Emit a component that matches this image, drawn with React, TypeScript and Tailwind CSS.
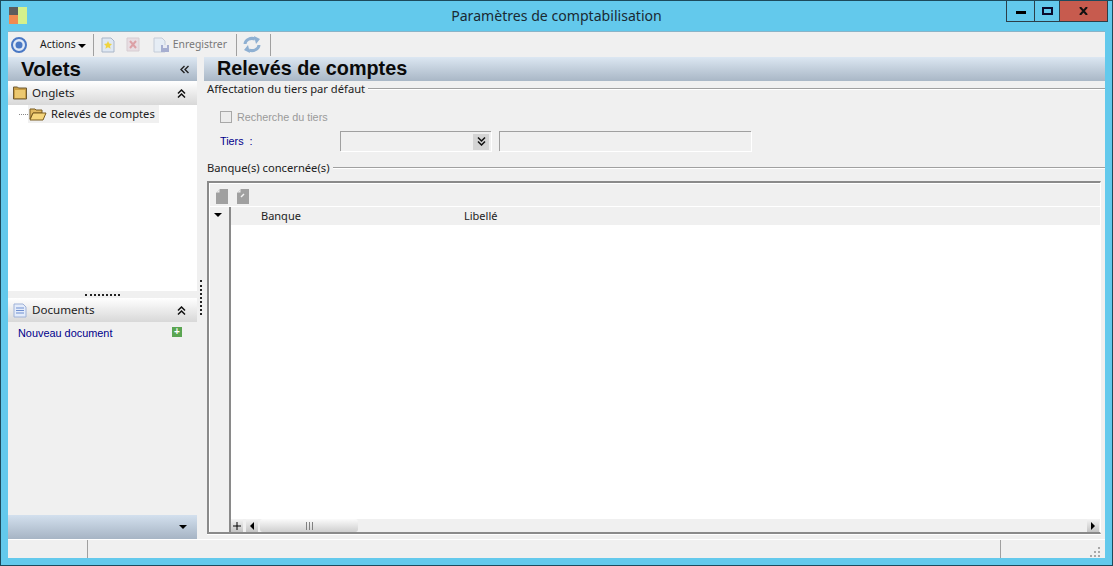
const sans = { fontFamily: '"Noto Sans", "Open Sans", sans-serif' }
const arial = { fontFamily: '"Liberation Sans", Arial, sans-serif' }

function DoubleChevron({ up = true }: { up?: boolean }) {
  return (
    <svg width="9" height="9" viewBox="0 0 9 9" fill="none" stroke="#111" strokeWidth="1.5">
      {up ? (
        <path d="M1 4.5 4.5 1 8 4.5M1 8.5 4.5 5 8 8.5" />
      ) : (
        <path d="M1 .5 4.5 4 8 .5M1 4.5 4.5 8 8 4.5" />
      )}
    </svg>
  )
}

function Folder({ open = false }: { open?: boolean }) {
  return open ? (
    <svg width="18" height="14" viewBox="0 0 18 14">
      <path d="M1 2h5l1 1h6v3H4L1 12z" fill="#e0b860" stroke="#7a5c20" />
      <path d="M1 13 4 6h13l-3 7z" fill="#f6d67c" stroke="#7a5c20" />
    </svg>
  ) : (
    <svg width="14" height="14" viewBox="0 0 14 14">
      <path d="M.5 1h4l1 1h8v11H.5z" fill="#c99e44" stroke="#6f5a34" />
      <path d="M2 4h10v8H2z" fill="#ecc870" />
    </svg>
  )
}

function PanelHead({ title, icon }: { title: string; icon: React.ReactNode }) {
  return (
    <div className="flex h-6 items-center bg-gradient-to-b from-[#ffffff] to-[#d8d8d8] pl-[5px] pr-[11px]">
      <span className="flex w-[19px] shrink-0">{icon}</span>
      <span className="flex-1 text-[11.6px] text-[#222]">{title}</span>
      <DoubleChevron />
    </div>
  )
}

function GroupTitle({ label }: { label: string }) {
  return (
    <div className="flex items-center gap-[3px] text-[11.2px] leading-4 text-[#222]">
      <span className="whitespace-nowrap">{label}</span>
      <span className="h-[2px] flex-1 border-t border-[#a0a0a0] bg-white" />
    </div>
  )
}

function ToolSep() {
  return <span className="block h-[22px] w-px shrink-0 bg-[#a0a0a0]" />
}

function ScrollArrowBox({ children }: { children: React.ReactNode }) {
  return (
    <span className="flex h-[13px] w-[12px] items-center justify-center bg-gradient-to-b from-[#f4f4f4] to-[#c4c4c4]">
      {children}
    </span>
  )
}

export default function App() {
  return (
    <div
      className="flex h-[566px] w-[1113px] flex-col overflow-hidden border border-[#1d4a5c] bg-[#63c9ec] px-[7px] pb-[7px]"
      style={sans}
    >
      {/* Title bar */}
      <div className="relative flex h-[30px] shrink-0 items-center justify-center">
        <span className="text-[14.1px] text-[#1a2a33]">Paramètres de comptabilisation</span>
        <svg className="absolute left-[1px] top-[6px]" width="18" height="17" viewBox="0 0 18 17">
          <rect width="9" height="8" fill="#5d5d5d" />
          <rect y="8" width="9" height="9" fill="#f08a50" />
          <rect x="9" width="9" height="17" fill="#d4f08c" />
        </svg>
        <div className="absolute right-[-3px] top-[-1px] flex h-[22px] border border-t-0 border-[#2c3e48]">
          <span className="flex w-[28px] items-center justify-center border-r border-[#2c3e48]">
            <span className="mt-[3px] h-[3px] w-[10px] bg-black" />
          </span>
          <span className="flex w-[25px] items-center justify-center border-r border-[#2c3e48]">
            <span className="h-[8px] w-[11px] border-2 border-[#0a0a2a]" />
          </span>
          <span className="flex w-[47px] items-center justify-center bg-[#c75b4e]">
            <svg width="9" height="8" viewBox="0 0 9 8" stroke="#111" strokeWidth="2">
              <path d="M1 0l7 8M8 0 1 8" />
            </svg>
          </span>
        </div>
      </div>

      {/* Toolbar */}
      <div className="flex h-[26px] shrink-0 items-center border-t border-[#8ab4c8] bg-[#f0f0f0] pl-[2px] text-[10.4px] text-[#1a1a1a]">
        <svg width="18" height="18" viewBox="0 0 18 18">
          <circle cx="9" cy="9" r="7" fill="#dfe9f7" stroke="#4a78c4" strokeWidth="2" />
          <circle cx="9" cy="9" r="3.5" fill="#4a78c4" />
        </svg>
        <span className="ml-[12px]">Actions</span>
        <span className="ml-[2px] mt-[2px] h-0 w-0 border-x-[4px] border-t-[4px] border-x-transparent border-t-black" />
        <span className="ml-[7px] mr-[6px]"><ToolSep /></span>
        <svg width="16" height="16" viewBox="0 0 16 16">
          <path d="M2 1h9l3 3v11H2z" fill="#dfe8f3" stroke="#a9b6c8" />
          <path d="M8 4l1.2 2.6 2.8.3-2 2 .6 2.8L8 10.3l-2.6 1.4.6-2.8-2-2 2.8-.3z" fill="#f0d440" />
        </svg>
        <svg className="ml-[10px]" width="14" height="15" viewBox="0 0 14 15">
          <path d="M1 1h12v13H1z" fill="#e8dde2" stroke="#d6cdd2" />
          <path d="M4 4l6 7M10 4l-6 7" stroke="#dca0a6" strokeWidth="2" />
        </svg>
        <svg className="ml-[13px]" width="17" height="16" viewBox="0 0 17 16">
          <path d="M1 1h8l3 3v11H1z" fill="#e6edf5" stroke="#c4ccd8" />
          <path d="M8 8h8v7H8z" fill="#a6aed0" />
          <path d="M10 8h4v3h-4z" fill="#e8ebf3" />
        </svg>
        <span className="ml-[3px] text-[#777]">Enregistrer</span>
        <span className="ml-[9px]"><ToolSep /></span>
        <svg className="ml-[6px]" width="18" height="17" viewBox="0 0 18 17" fill="none" stroke="#8fb0d2" strokeWidth="3">
          <path d="M2 8a7 6 0 0 1 10-5" />
          <path d="M16 9a7 6 0 0 1-10 5" />
          <path d="M11 0l6 3-4 5zM7 17l-6-3 4-5z" fill="#8fb0d2" strokeWidth="0" />
        </svg>
        <span className="ml-[9px]"><ToolSep /></span>
      </div>

      {/* Main */}
      <div className="flex min-h-0 flex-1 bg-[#f0f0f0]">
        {/* Sidebar */}
        <div className="flex w-[189px] shrink-0 flex-col">
          <div className="flex h-6 shrink-0 items-center bg-gradient-to-b from-[#dce7f2] to-[#a9b7c6] pl-[13px] pr-[8px]">
            <span className="flex-1 text-[20.5px] font-bold leading-6 text-[#0a0a0a]" style={arial}>
              Volets
            </span>
            <svg width="9" height="9" viewBox="0 0 9 9" fill="none" stroke="#222" strokeWidth="1.4">
              <path d="M4.5 1 1 4.5 4.5 8M8.5 1 5 4.5 8.5 8" />
            </svg>
          </div>
          <PanelHead title="Onglets" icon={<Folder />} />
          <div className="h-[186px] shrink-0 bg-white">
            <div className="flex items-center pl-[11px]">
              <span className="w-[9px] border-t border-dotted border-[#888]" />
              <span className="flex h-[18px] items-center bg-[#f0f0f0] pl-[1px] pr-[4px] text-[11.2px] text-[#222]">
                <span className="mr-[4px] flex"><Folder open /></span>
                Relevés de comptes
              </span>
            </div>
          </div>
          <div className="flex h-[7px] shrink-0 items-center justify-center">
            <span className="w-[35px] border-t-2 border-dotted border-[#222]" />
          </div>
          <PanelHead
            title="Documents"
            icon={
              <svg width="14" height="15" viewBox="0 0 14 15">
                <path d="M1 1h9l3 3v10H1z" fill="#e4ecfa" stroke="#9fb2d8" />
                <path d="M3 5h8M3 7.5h8M3 10h8" stroke="#6f8fd0" />
              </svg>
            }
          />
          <div className="flex flex-1 items-start justify-between pl-[10px] pr-[15px] pt-[3px] text-[10.9px] leading-[16px] text-[#00008b]" style={arial}>
            <span>Nouveau document</span>
            <span className="mt-[2px] flex h-[10px] w-[10px] items-center justify-center bg-[#5aa552] text-[10px] font-bold leading-none text-white">+</span>
          </div>
          <div className="flex h-[24px] shrink-0 items-center justify-end bg-gradient-to-b from-[#d3e0ee] to-[#a6b4c4] pr-[10px]">
            <span className="h-0 w-0 border-x-[4px] border-t-[4px] border-x-transparent border-t-black" />
          </div>
        </div>

        {/* Splitter */}
        <div className="flex w-[7px] shrink-0 items-start justify-center pt-[223px]">
          <span className="h-[35px] border-l-2 border-dotted border-[#222]" />
        </div>

        {/* Right pane */}
        <div className="flex min-w-0 flex-1 flex-col">
          <div className="flex h-6 shrink-0 items-center bg-gradient-to-b from-[#dce7f2] to-[#a9b7c6] pl-[13px] text-[19.8px] font-bold text-[#0a0a0a]" style={arial}>
            Relevés de comptes
          </div>
          <div className="flex min-h-0 flex-1 flex-col pl-[3px]">
            <GroupTitle label="Affectation du tiers par défaut" />
            <div className="mt-[12px] flex items-center pl-[13px] text-[10.8px] leading-4 text-[#9a9a9a]" style={arial}>
              <span className="mr-[5px] h-[12px] w-[12px] border border-[#a8a8a8] bg-[#ececec]" />
              Recherche du tiers
            </div>
            <div className="mt-[6px] flex h-5 items-center pl-[13px] text-[10.8px]" style={arial}>
              <span className="w-[120px] text-[#00008b]">Tiers &nbsp;:</span>
              <span className="flex h-5 w-[151px] items-center justify-end border-l border-t border-[#a0a0a0] bg-[#f0f0f0] pr-[2px] shadow-[1px_1px_0_#fff]">
                <span className="flex h-[16px] w-[16px] items-center justify-center bg-[#d4d4d4]">
                  <DoubleChevron up={false} />
                </span>
              </span>
              <span className="ml-[8px] h-5 w-[252px] border-l border-t border-[#a0a0a0] bg-[#f0f0f0] shadow-[1px_1px_0_#fff]" />
            </div>
            <div className="mt-[9px]">
              <GroupTitle label="Banque(s) concernée(s)" />
            </div>

            {/* Grid */}
            <div className="mt-[5px] mb-[5px] mr-[4px] flex min-h-0 flex-1 flex-col border-b-2 border-l-2 border-r border-t-2 border-b-[#8a8a8a] border-l-[#8a8a8a] border-r-white border-t-[#8a8a8a] shadow-[inset_1px_1px_0_#fff,0_1px_0_#fff]">
              <div className="flex h-[23px] shrink-0 items-center gap-[9px] pl-[7px] pt-[3px]">
                {[0, 1].map((n) => (
                  <svg key={n} width="12" height="15" viewBox="0 0 12 15">
                    <path d="M0 4 4 0h8v15H0z" fill="#a0a0a0" />
                    <path d="M.5 3.5h3v-3z" fill="#ececec" />
                    {n === 1 && <path d="M4 8l3-3" stroke="#f4f4f4" strokeWidth="1.5" />}
                  </svg>
                ))}
              </div>
              <div className="flex min-h-0 flex-1 border-t border-white">
                <div className="flex w-[22px] shrink-0 flex-col items-center border-r-2 border-[#8a8a8a] pt-[6px]">
                  <span className="mr-[2px] h-0 w-0 border-x-[4px] border-t-[4px] border-x-transparent border-t-black" />
                </div>
                <div className="flex min-w-0 flex-1 flex-col">
                  <div className="flex h-[18px] shrink-0 items-center pt-[1px] text-[11px] text-[#222]">
                    <span className="ml-[30px] w-[203px]">Banque</span>
                    <span>Libellé</span>
                  </div>
                  <div className="min-h-0 flex-1 bg-white" />
                  <div className="flex h-[13px] shrink-0 items-center">
                    <ScrollArrowBox>
                      <svg width="8" height="8" viewBox="0 0 8 8" stroke="#000">
                        <path d="M4 0v8M0 4h8" />
                      </svg>
                    </ScrollArrowBox>
                    <span className="ml-[3px]">
                      <ScrollArrowBox>
                        <span className="h-0 w-0 border-y-[4px] border-r-[4px] border-y-transparent border-r-black" />
                      </ScrollArrowBox>
                    </span>
                    <span className="ml-[2px] flex h-[13px] w-[98px] items-center justify-center gap-[2px] rounded-[3px] bg-gradient-to-b from-[#fbfbfb] to-[#cfcfcf]">
                      <span className="h-[8px] w-px bg-[#808080]" />
                      <span className="h-[8px] w-px bg-[#808080]" />
                      <span className="h-[8px] w-px bg-[#808080]" />
                    </span>
                    <span className="ml-auto mr-[1px]">
                      <ScrollArrowBox>
                        <span className="h-0 w-0 border-y-[4px] border-l-[4px] border-y-transparent border-l-black" />
                      </ScrollArrowBox>
                    </span>
                  </div>
                </div>
              </div>
            </div>
          </div>
        </div>
      </div>

      {/* Status bar */}
      <div className="flex h-[19px] shrink-0 border-t border-white bg-[#f0f0f0]">
        <span className="w-[80px] border-r border-[#a0a0a0]" />
        <span className="flex-1 border-r border-[#a0a0a0]" />
        <span className="relative w-[104px]">
          <svg className="absolute bottom-[1px] right-[5px]" width="10" height="10" viewBox="0 0 10 10" fill="#a8a8a8">
            <path d="M8 0h2v2H8zM4 4h2v2H4zM8 4h2v2H8zM0 8h2v2H0zM4 8h2v2H4zM8 8h2v2H8z" />
          </svg>
        </span>
      </div>
    </div>
  )
}
